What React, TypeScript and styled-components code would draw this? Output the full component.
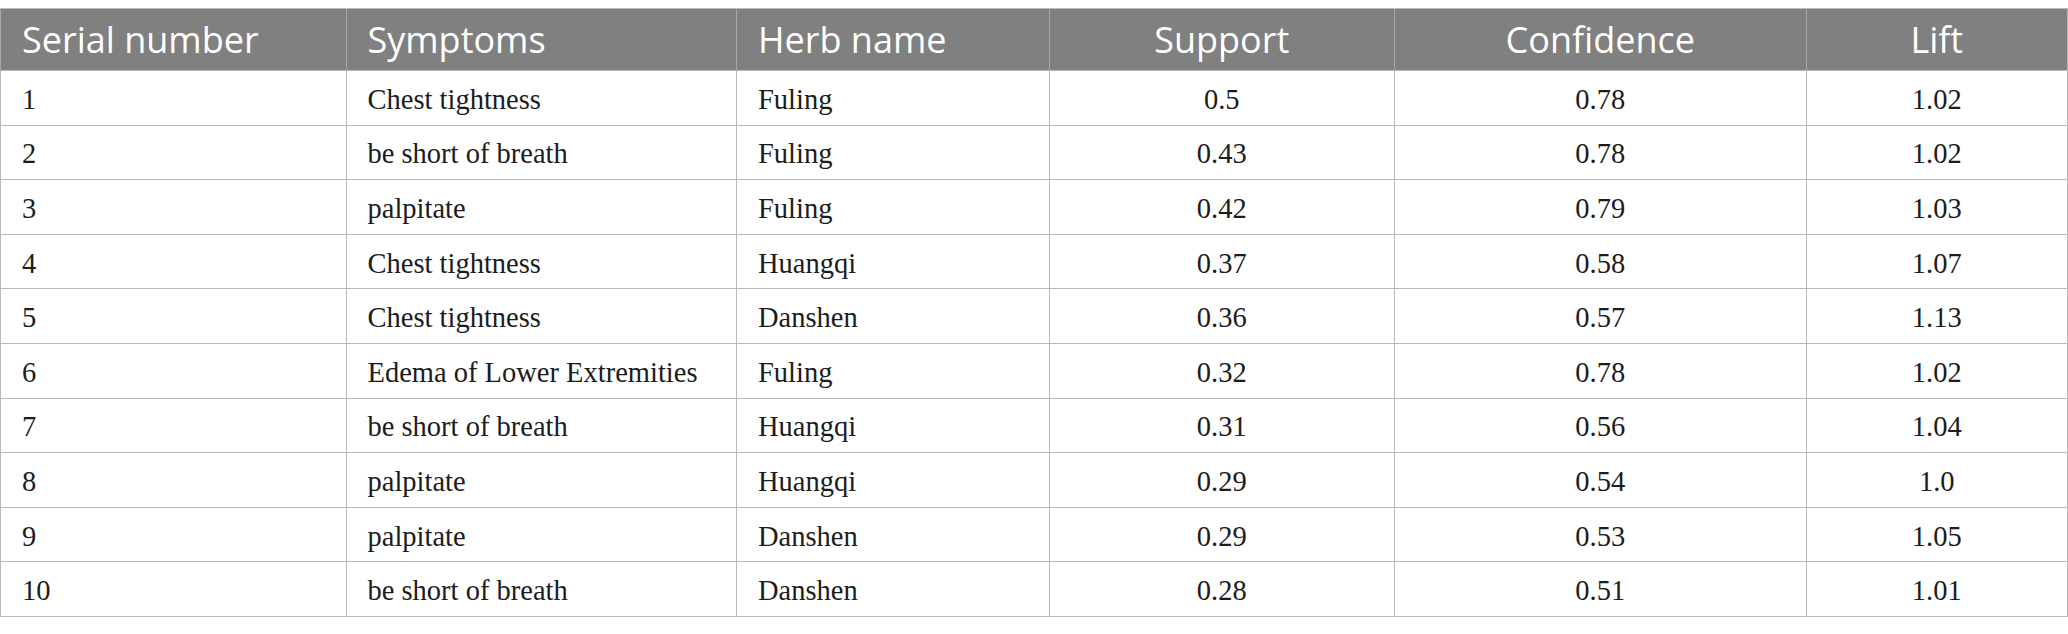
import React from "react";
import styled, { createGlobalStyle } from "styled-components";

const GlobalStyle = createGlobalStyle`
  html, body {
    margin: 0;
    padding: 0;
    background: #ffffff;
  }
`;

const Page = styled.div`
  padding-top: 8px;
  width: 2067px;
`;

const Table = styled.table`
  width: 2067px;
  border-collapse: collapse;
  table-layout: fixed;
  border: 1px solid #b9b9b9;
`;

const HeadRow = styled.tr`
  height: 62px;
  background: #7f807f;
`;

const HeadCell = styled.th<{ $align?: "left" | "center" }>`
  padding: 0 0 0 21px;
  text-align: ${(p) => p.$align ?? "left"};
  font-family: "Open Sans", "Noto Sans", sans-serif;
  font-weight: 400;
  font-size: 36px;
  color: #ffffff;
  border-left: 1px solid #a6a7a6;
  border-top: 1px solid #b9b9b9;
  white-space: nowrap;
  ${(p) => (p.$align === "center" ? "padding: 0;" : "")}
`;

const BodyRow = styled.tr`
  height: 54.6px;
`;

const Cell = styled.td<{ $align?: "left" | "center" }>`
  padding: 4px 0 0 21px;
  text-align: ${(p) => p.$align ?? "left"};
  font-family: "Liberation Serif", "Times New Roman", serif;
  font-size: 28.5px;
  color: #1c1c1c;
  border: 1px solid #b9b9b9;
  white-space: nowrap;
  ${(p) => (p.$align === "center" ? "padding: 4px 0 0 0;" : "")}
`;

const widths = [345.5, 390.5, 312.5, 345.5, 411.6, 261.4];

const rows: [string, string, string, string, string, string][] = [
  ["1", "Chest tightness", "Fuling", "0.5", "0.78", "1.02"],
  ["2", "be short of breath", "Fuling", "0.43", "0.78", "1.02"],
  ["3", "palpitate", "Fuling", "0.42", "0.79", "1.03"],
  ["4", "Chest tightness", "Huangqi", "0.37", "0.58", "1.07"],
  ["5", "Chest tightness", "Danshen", "0.36", "0.57", "1.13"],
  ["6", "Edema of Lower Extremities", "Fuling", "0.32", "0.78", "1.02"],
  ["7", "be short of breath", "Huangqi", "0.31", "0.56", "1.04"],
  ["8", "palpitate", "Huangqi", "0.29", "0.54", "1.0"],
  ["9", "palpitate", "Danshen", "0.29", "0.53", "1.05"],
  ["10", "be short of breath", "Danshen", "0.28", "0.51", "1.01"],
];

const headers: { label: string; align: "left" | "center" }[] = [
  { label: "Serial number", align: "left" },
  { label: "Symptoms", align: "left" },
  { label: "Herb name", align: "left" },
  { label: "Support", align: "center" },
  { label: "Confidence", align: "center" },
  { label: "Lift", align: "center" },
];

export default function App() {
  return (
    <>
      <GlobalStyle />
      <Page>
        <Table>
          <colgroup>
            {widths.map((w, i) => (
              <col key={i} style={{ width: `${w}px` }} />
            ))}
          </colgroup>
          <thead>
            <HeadRow>
              {headers.map((h) => (
                <HeadCell key={h.label} $align={h.align}>
                  {h.label}
                </HeadCell>
              ))}
            </HeadRow>
          </thead>
          <tbody>
            {rows.map((r) => (
              <BodyRow key={r[0]}>
                {r.map((v, i) => (
                  <Cell key={i} $align={i >= 3 ? "center" : "left"}>
                    {v}
                  </Cell>
                ))}
              </BodyRow>
            ))}
          </tbody>
        </Table>
      </Page>
    </>
  );
}
